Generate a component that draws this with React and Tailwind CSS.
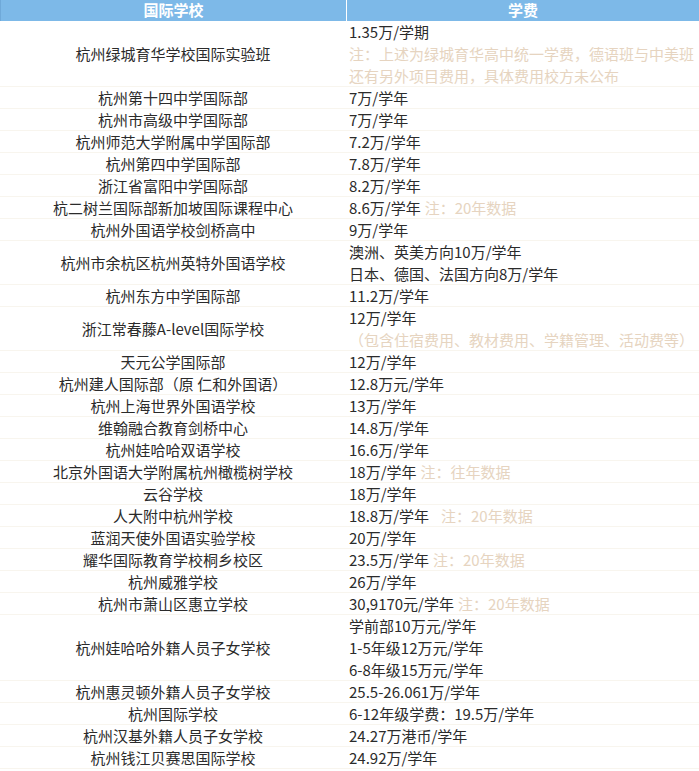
const NOTE20 = "注：20年数据";

const rows = [
  {
    name: "杭州绿城育华学校国际实验班",
    fees: [
      { t: "1.35万/学期" },
      { n: "注：上述为绿城育华高中统一学费，德语班与中美班" },
      { n: "还有另外项目费用，具体费用校方未公布" },
    ],
  },
  { name: "杭州第十四中学国际部", fees: [{ t: "7万/学年" }] },
  { name: "杭州市高级中学国际部", fees: [{ t: "7万/学年" }] },
  { name: "杭州师范大学附属中学国际部", fees: [{ t: "7.2万/学年" }] },
  { name: "杭州第四中学国际部", fees: [{ t: "7.8万/学年" }] },
  { name: "浙江省富阳中学国际部", fees: [{ t: "8.2万/学年" }] },
  { name: "杭二树兰国际部新加坡国际课程中心", fees: [{ t: "8.6万/学年", n: NOTE20 }] },
  { name: "杭州外国语学校剑桥高中", fees: [{ t: "9万/学年" }] },
  {
    name: "杭州市余杭区杭州英特外国语学校",
    fees: [{ t: "澳洲、英美方向10万/学年" }, { t: "日本、德国、法国方向8万/学年" }],
  },
  { name: "杭州东方中学国际部", fees: [{ t: "11.2万/学年" }] },
  {
    name: "浙江常春藤A-level国际学校",
    fees: [{ t: "12万/学年" }, { n: "（包含住宿费用、教材费用、学籍管理、活动费等）" }],
  },
  { name: "天元公学国际部", fees: [{ t: "12万/学年" }] },
  { name: "杭州建人国际部（原 仁和外国语）", fees: [{ t: "12.8万元/学年" }] },
  { name: "杭州上海世界外国语学校", fees: [{ t: "13万/学年" }] },
  { name: "维翰融合教育剑桥中心", fees: [{ t: "14.8万/学年" }] },
  { name: "杭州娃哈哈双语学校", fees: [{ t: "16.6万/学年" }] },
  { name: "北京外国语大学附属杭州橄榄树学校", fees: [{ t: "18万/学年", n: "注：往年数据" }] },
  { name: "云谷学校", fees: [{ t: "18万/学年" }] },
  { name: "人大附中杭州学校", fees: [{ t: "18.8万/学年", n: NOTE20, gap: true }] },
  { name: "蓝润天使外国语实验学校", fees: [{ t: "20万/学年" }] },
  { name: "耀华国际教育学校桐乡校区", fees: [{ t: "23.5万/学年", n: NOTE20 }] },
  { name: "杭州威雅学校", fees: [{ t: "26万/学年" }] },
  { name: "杭州市萧山区惠立学校", fees: [{ t: "30,9170元/学年", n: NOTE20 }] },
  {
    name: "杭州娃哈哈外籍人员子女学校",
    fees: [{ t: "学前部10万元/学年" }, { t: "1-5年级12万元/学年" }, { t: "6-8年级15万元/学年" }],
  },
  { name: "杭州惠灵顿外籍人员子女学校", fees: [{ t: "25.5-26.061万/学年" }] },
  { name: "杭州国际学校", fees: [{ t: "6-12年级学费：19.5万/学年" }] },
  { name: "杭州汉基外籍人员子女学校", fees: [{ t: "24.27万港币/学年" }] },
  { name: "杭州钱江贝赛思国际学校", fees: [{ t: "24.92万/学年" }] },
];

export default function App() {
  return (
    <div
      className="w-[699px] bg-white text-[15px] text-[#2b2b2b]"
      style={{ fontFamily: '"Microsoft YaHei", "Noto Sans CJK SC", "Noto Sans", sans-serif' }}
    >
      {/* HEADER */}
      <div className="grid grid-cols-[346px_1fr] h-[21px] bg-[#7db9e8] text-white font-bold leading-[19px] border-l border-[#6fa9d9]">
        <div className="text-center border-r border-white">国际学校</div>
        <div className="text-center">学费</div>
      </div>

      {/* BODY */}
      {rows.map((r) => (
        <div
          key={r.name}
          className="grid grid-cols-[346px_1fr] leading-[22px] shadow-[inset_0_-1px_0_#f8f5ee]"
        >
          <div className="flex items-center justify-center whitespace-nowrap">{r.name}</div>
          <div className="pl-[3px]">
            {r.fees.map((f, i) => (
              <div key={i} className="whitespace-nowrap">
                {f.t}
                {f.n && (
                  <span className={`text-[#e6d4c0] ${f.t ? (f.gap ? "ml-3" : "ml-1") : ""}`}>
                    {f.n}
                  </span>
                )}
              </div>
            ))}
          </div>
        </div>
      ))}
    </div>
  );
}
